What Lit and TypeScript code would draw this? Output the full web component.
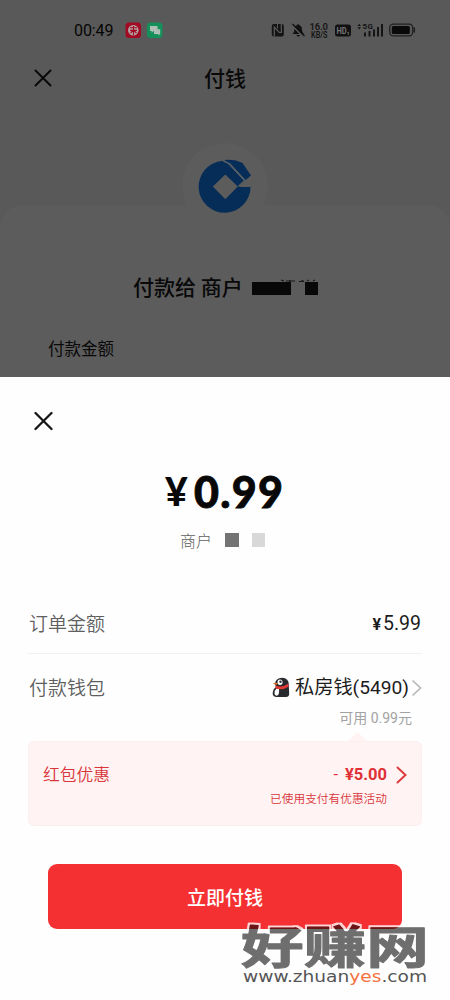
import { LitElement, html, css } from "lit";
import { customElement } from "lit/decorators.js";

@customElement("status-bar")
class StatusBar extends LitElement {
  static styles = css`
    :host { display: flex; height: 60px; align-items: center; padding: 0 33px 0 74px; box-sizing: border-box; }
    .time { font: 400 16px/20px Roboto, sans-serif; width: 51px; margin-top: 2px; letter-spacing: -0.1px; color: #050505; }
    svg { display: block; }
    .right { margin-left: auto; }
    text { font-family: Roboto, sans-serif; }
  `;
  render() {
    return html`
      <span class="time">00:49</span>
      <svg width="40" height="18" viewBox="0 0 40 18">
        <rect x="0.5" y="1.5" width="15.500" height="15.500" rx="3.5" fill="#a10a22" />
        <circle cx="8.3" cy="9.3" r="5.3" fill="#b3a3a3" />
        <path d="M5 6.8h7M5 9.4h7M8.5 5v9M5.6 12l2.9-3 2.9 3" stroke="#a10a22" stroke-width="1.1" fill="none" />
        <rect x="22" y="1.5" width="15.500" height="15.500" rx="3.5" fill="#14905a" />
        <path d="M25 5h7.500v5h-3.800l-2 1.7V10H25z" fill="#aebfb5" />
        <path d="M29 8.200h6.200V13h-.8v1.600l-2-1.600H29z" fill="#aebfb5" />
      </svg>
      <svg class="right" width="146" height="20" viewBox="0 0 146 20">
        <rect x="0.800" y="4" width="12" height="12.500" rx="2" fill="#141414" />
        <path d="M3.300 16.500V7l5 5.500h2V4" stroke="#5b5b5b" stroke-width="1.200" fill="none" />
        <path d="M6.500 4v4.500" stroke="#5b5b5b" stroke-width="1" />
        <path d="M21.500 14q2-1.500 2-5 0-3.200 3-4 0-1.200.7-1.200t.7 1.200q3 .8 3 4 0 3.500 2 5z M25.500 15H29q-.4 1.600-1.800 1.600T25.500 15z" fill="#111" />
        <path d="M20.500 4.900L32.500 16.900" stroke="#595959" stroke-width="1.600" />
        <path d="M21.500 4L33.500 16" stroke="#111" stroke-width="1.400" />
        <text x="38.500" y="9.800" font-size="9.500" font-weight="600" fill="#151515" textLength="18.500">16.0</text>
        <text x="40" y="18" font-size="8.500" font-weight="600" fill="#151515" textLength="16.500" lengthAdjust="spacingAndGlyphs">KB/S</text>
        <rect x="64" y="4.500" width="16" height="12" rx="2.500" fill="#111" />
        <text x="65.500" y="13.600" font-size="8.500" font-weight="700" fill="#777" textLength="13" lengthAdjust="spacingAndGlyphs">HD₁</text>
        <path d="M86.500 6l1.700-2.200L90 6zM86.500 7.200h3.500L88.200 9.400z" fill="#151515" />
        <text x="91.500" y="9" font-size="8" font-weight="700" fill="#151515" textLength="10.500">5G</text>
        <path d="M94 12.500v4M98.500 11v5.500M103 9.500v7M107 7v9.500M111 4v12.500" stroke="#151515" stroke-width="2" />
        <rect x="118.700" y="4.200" width="23" height="11.600" rx="3.500" fill="none" stroke="#202020" stroke-width="1.300" />
        <rect x="120.800" y="6" width="18" height="8" rx="1.500" fill="#090909" />
        <path d="M143.300 8v4" stroke="#202020" stroke-width="1.500" stroke-linecap="round" />
      </svg>
    `;
  }
}

@customElement("merchant-page")
class MerchantPage extends LitElement {
  static styles = css`
    :host { display: flex; flex-direction: column; height: 377px; background: #595959; color: #090909; overflow: hidden; }
    .nav { display: grid; grid-template-columns: 60px 1fr 60px; align-items: center; height: 36px; flex: none; }
    .nav svg { margin-left: 34px; }
    .title { text-align: center; font-size: 21px; line-height: 30px; font-weight: 500; margin-top: -3px; }
    .card { flex: 1; margin-top: 109px; background: #5c5c5c; border-radius: 22px 22px 0 0; display: flex; flex-direction: column; }
    .logo { width: 86px; height: 86px; margin: -62px auto 0; border-radius: 50%; background: #5c5c5c; flex: none; }
    .logo svg { display: block; }
    .payee { display: flex; align-items: center; margin: 41px 0 0 133px; height: 32px; font-size: 21px; font-weight: 500; white-space: pre; }
    .payee svg { margin: 1px 0 0 9px; }
    .label { margin: 34px 0 0 48px; font-size: 16.500px; line-height: 24px; }
  `;
  render() {
    return html`
      <status-bar></status-bar>
      <div class="nav">
        <svg width="18" height="18" viewBox="0 0 18 18"><path d="M1.500 1.500l15 15M16.500 1.500l-15 15" stroke="#0a0a0a" stroke-width="2" stroke-linecap="round" /></svg>
        <span class="title">付钱</span>
      </div>
      <div class="card">
        <div class="logo">
          <svg width="86" height="86" viewBox="0 0 86 86">
            <path d="M39.500 17.900A26 26 0 1 0 68.600 43.900H59.500L56 43.300L43.300 56.300L30.800 43.600L43.300 31.400L55.500 43.200L61.800 37.500L45.500 20.500Q43 18 39.500 17.900Z" fill="#052d58" />
            <path d="M42.500 17Q52 15.500 60.500 20L69 32.500L63.300 37.300Z" fill="#052d58" />
            <path d="M41.500 18.200L47.500 20.700L64 38.500" stroke="#596068" stroke-width="1.400" fill="none" />
          </svg>
        </div>
        <div class="payee"><span>付款给 商户</span>
          <svg width="67" height="20" viewBox="0 0 67 20">
            <rect y="5" width="39" height="13" fill="#080808" /><rect x="53" y="5" width="13" height="13" fill="#080808" />
            <path d="M29 3l3 1M34 4h9M38 3v2M47 4.500h5l-2-1M55 3l2 1M61 4l2-1" stroke="#181818" stroke-width="1.200" />
          </svg>
        </div>
        <div class="label">付款金额</div>
      </div>
    `;
  }
}

@customElement("pay-sheet")
class PaySheet extends LitElement {
  static styles = css`
    :host { display: flex; flex-direction: column; height: 623px; background: #fefefe; color: #1c1c1c; box-sizing: border-box; padding: 0 28px; }
    svg { display: block; flex: none; }
    .close { margin: 34px 0 0 6px; }
    .amount { display: flex; align-items: center; height: 52px; margin: 34px 0 0 137px; color: #080808; font-family: Lato, sans-serif; font-weight: 900; }
    .yen { font-size: 39px; width: 29px; }
    .num { font-size: 43px; letter-spacing: 1.300px; -webkit-text-stroke: 0.800px #080808; }
    .payee { display: flex; align-items: center; height: 24px; margin: 11px 0 0 152px; font-size: 16px; font-weight: 300; color: #5f5f5f; }
    .m1, .m2 { width: 13.500px; height: 13.500px; background: #737373; margin-left: 13px; }
    .m2 { background: #d8d8d8; }
    .row { display: flex; justify-content: space-between; align-items: center; font-size: 19px; height: 30px; flex: none; }
    .order { margin-top: 56px; }
    .key { color: #5f5f5f; font-weight: 350; margin: -2px 0 0 1px; }
    .price { font-family: Roboto, sans-serif; font-size: 19.500px; margin-right: 1px; }
    .price b { font-size: 16px; margin-right: 2px; }
    .rule { height: 1px; background: #f1f1f1; margin-top: 15px; flex: none; }
    .wallet { margin-top: 18px; }
    .bank { display: flex; align-items: center; font-family: Roboto, "Noto Sans CJK SC", sans-serif; font-size: 19.200px; line-height: 30px; white-space: nowrap; margin-top: 1px; }
    .bank .penguin { margin-right: 5px; }
    .bank .chev { margin-left: 2px; }
    .avail { font: 14px/20px Roboto, "Noto Sans CJK SC", sans-serif; color: #a2a2a2; text-align: right; margin: 6px 10px 0 0; }
    .tip { margin: 4px 0 0 320px; }
    .coupon { background: #fff4f3; border: 1px solid #fbefef; border-radius: 6px; height: 85px; box-sizing: border-box; display: flex; justify-content: space-between; padding: 20px 14px 0; color: #d9363b; flex: none; }
    .coupon .name { font-size: 16.800px; line-height: 24px; font-weight: 350; }
    .deal { display: grid; grid-template-columns: auto 11px; column-gap: 9px; align-content: start; align-items: center; }
    .off { font: 700 16.500px/24px Roboto, sans-serif; text-align: right; white-space: pre; color: #df3036; padding-top: 1px; }
    .dash { font-weight: 400; margin-right: 7px; }
    .note { font-size: 11.700px; line-height: 18px; margin-top: 2px; white-space: nowrap; font-weight: 350; }
    .pay { margin: 38px 20px 0; height: 65px; border-radius: 9px; background: #f43033; color: #fff; font-size: 19px; font-weight: 500; display: flex; align-items: center; justify-content: center; flex: none; }
  `;
  render() {
    return html`
      <svg class="close" width="20" height="20" viewBox="0 0 20 20"><path d="M1.500 2l16 16M17.500 2l-16 16" stroke="#161616" stroke-width="2.300" stroke-linecap="round" /></svg>
      <div class="amount"><span class="yen">¥</span><span class="num">0.99</span></div>
      <div class="payee"><span>商户</span><i class="m1"></i><i class="m2"></i></div>
      <div class="row order"><span class="key">订单金额</span><span class="price"><b>¥</b>5.99</span></div>
      <div class="rule"></div>
      <div class="row wallet">
        <span class="key">付款钱包</span>
        <span class="bank">
          <svg class="penguin" width="18" height="21" viewBox="0 0 18 21">
            <path d="M3 7Q3.500 1 10 .8Q17 1 16.800 8L17.200 17Q17 20 14 20H4Q0 19.500 .8 15Q1.300 11.500 4 10Z" fill="#292a2e" />
            <path d="M4.500 11.500Q1.800 14 2.500 17Q3 18.800 5 18.800Q7.500 18 7 12Z" fill="#fff" />
            <ellipse cx="8" cy="5.300" rx="2.500" ry="2.700" fill="#fff" /><circle cx="8.500" cy="4.800" r="1.200" fill="#333" />
            <path d="M1 6.500Q3.500 4.800 6 6.800L4 8Z" fill="#d5702a" />
            <path d="M3.500 8.500Q10 11 16.300 6.700L16.800 9.500Q10 14 3.500 11.300Z" fill="#e33a32" />
          </svg>
          私房钱(5490)
          <svg class="chev" width="11" height="18" viewBox="0 0 11 18"><path d="M1.500 1.500l8 7.500l-8 7.500" fill="none" stroke="#b7b7b7" stroke-width="1.700" /></svg>
        </span>
      </div>
      <div class="avail">可用 0.99元</div>
      <svg class="tip" width="20" height="9" viewBox="0 0 20 9"><path d="M0 9L8 1.300Q9.500 0 11 1.300L19 9Z" fill="#fff4f3" /></svg>
      <div class="coupon">
        <span class="name">红包优惠</span>
        <div class="deal">
          <span class="off"><span class="dash">-</span>¥5.00</span>
          <svg width="11" height="18" viewBox="0 0 11 18"><path d="M1.500 1.500l8 7.500l-8 7.500" fill="none" stroke="#df3a40" stroke-width="2" stroke-linecap="round" /></svg>
          <span class="note">已使用支付有优惠活动</span>
        </div>
      </div>
      <div class="pay">立即付钱</div>
    `;
  }
}

@customElement("app-root")
class AppRoot extends LitElement {
  static styles = css`
    :host { display: block; position: relative; width: 450px; height: 1000px; overflow: hidden; font-family: "Noto Sans CJK SC", sans-serif; }
    .mark { position: absolute; left: 236px; top: 894px; overflow: visible; }
    .big { font: 700 52px "Noto Sans CJK SC", sans-serif; stroke: #000; stroke-width: 1.200px; stroke-linejoin: round; }
    .url { font: 400 15px "DejaVu Sans", sans-serif; }
  `;
  render() {
    return html`
      <merchant-page></merchant-page>
      <pay-sheet></pay-sheet>
      <svg class="mark" width="200" height="96" viewBox="0 -20 200 96">
        <defs>
          <filter id="halo" x="-10" y="-20" width="220" height="100" filterUnits="userSpaceOnUse" color-interpolation-filters="sRGB">
            <feMorphology in="SourceAlpha" operator="dilate" radius="1.500" result="grown" />
            <feFlood flood-color="#fff" flood-opacity="0.800" />
            <feComposite in2="grown" operator="in" />
            <feComposite in2="SourceAlpha" operator="out" result="edge" />
            <feComponentTransfer in="SourceGraphic" result="ink"><feFuncA type="linear" slope="0.570" /></feComponentTransfer>
            <feMerge><feMergeNode in="edge" /><feMergeNode in="ink" /></feMerge>
          </filter>
        </defs>
        <g filter="url(#halo)"><text class="big" x="0" y="0" transform="translate(5 49.500) scale(1.205 0.880)">好赚网</text></g>
        <text class="url" x="7" y="67.500" textLength="184" lengthAdjust="spacingAndGlyphs" fill="#555">www.zhuan<tspan fill="#f5713f">yes</tspan>.com</text>
      </svg>
    `;
  }
}
